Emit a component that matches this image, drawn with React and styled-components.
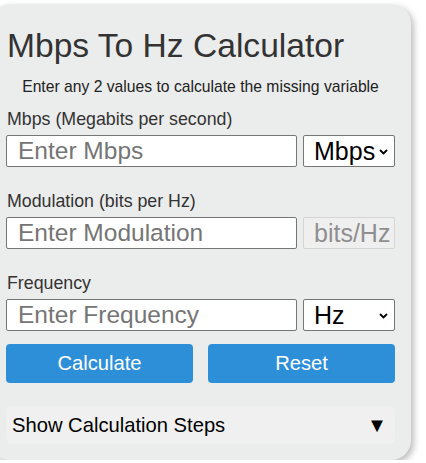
import React from "react";
import styled, { createGlobalStyle } from "styled-components";

const GlobalStyle = createGlobalStyle`
  html, body {
    margin: 0;
    padding: 0;
    background: #ffffff;
    font-family: "Liberation Sans", Arial, sans-serif;
  }
`;

// calculator card, slightly cut off on the left like the page it came from
const Card = styled.div`
  box-sizing: border-box;
  width: 421px;
  margin: 4px 0 0 -10px;
  padding: 23px 16px 16px 16px;
  background: #ebecec;
  border-radius: 20px;
  box-shadow: 3px 3px 6px rgba(0, 0, 0, 0.25);
`;

const Title = styled.h1`
  margin: 0 0 0 1px;
  font-size: 33.6px;
  font-weight: 400;
  line-height: 38px;
  color: #333333;
`;

const Subtitle = styled.p`
  margin: 13px 0 0 0;
  text-align: center;
  font-size: 15.7px;
  line-height: 18px;
  color: #222222;
`;

const Field = styled.div`
  margin-top: ${(p) => p.$top}px;
`;

const Label = styled.label`
  display: block;
  margin: 0 0 6px 1px;
  font-size: 17.8px;
  line-height: 20px;
  color: #333333;
`;

const Row = styled.div`
  display: flex;
  gap: 6px;
`;

const Input = styled.input`
  box-sizing: border-box;
  width: 291px;
  height: 32px;
  margin: 0;
  padding: 0 0 0 11px;
  border: 1px solid #767676;
  border-radius: 2px;
  background: #ffffff;
  font-family: "Liberation Sans", Arial, sans-serif;
  font-size: 24.5px;
  color: #000;
  outline: none;
  &::placeholder {
    color: #757575;
  }
`;

const UnitBox = styled.div`
  box-sizing: border-box;
  position: relative;
  width: 92px;
  height: 32px;
  display: flex;
  align-items: center;
  padding-left: 10px;
  border: 1px solid ${(p) => (p.$disabled ? "#d4d4d4" : "#767676")};
  border-radius: 2px;
  background: ${(p) => (p.$disabled ? "#efefef" : "#ffffff")};
  color: ${(p) => (p.$disabled ? "#8f8f8f" : "#000000")};
  font-size: 25px;
  white-space: nowrap;
  overflow: hidden;
`;

const Chevron = styled.svg`
  position: absolute;
  right: 6px;
  top: 13px;
`;

const Buttons = styled.div`
  display: flex;
  gap: 15px;
  margin-top: 13px;
`;

const Button = styled.button`
  flex: 1;
  height: 39px;
  border: none;
  border-radius: 4px;
  background: #2e8fd9;
  color: #ffffff;
  font-family: "Liberation Sans", Arial, sans-serif;
  font-size: 20.2px;
  cursor: pointer;
`;

const Steps = styled.div`
  display: flex;
  align-items: center;
  justify-content: space-between;
  height: 38px;
  margin-top: 23px;
  padding: 0 8px 0 6px;
  border-radius: 6px;
  background: #f0f0f0;
  color: #000000;
  font-size: 20.2px;
`;

const Unit = ({ value, disabled }) => (
  <UnitBox $disabled={disabled}>
    {value}
    {!disabled && (
      <Chevron width="9" height="6" viewBox="0 0 9 6">
        <path d="M1 1l3.5 3.5L8 1" fill="none" stroke="#000" strokeWidth="1.8" />
      </Chevron>
    )}
  </UnitBox>
);

const App = () => {
  return (
    <>
      <GlobalStyle />
      <Card>
        <Title>Mbps To Hz Calculator</Title>
        <Subtitle>Enter any 2 values to calculate the missing variable</Subtitle>

        <Field $top={13}>
          <Label>Mbps (Megabits per second)</Label>
          <Row>
            <Input placeholder="Enter Mbps" />
            <Unit value="Mbps" />
          </Row>
        </Field>

        <Field $top={24}>
          <Label>Modulation (bits per Hz)</Label>
          <Row>
            <Input placeholder="Enter Modulation" />
            <Unit value="bits/Hz" disabled />
          </Row>
        </Field>

        <Field $top={24}>
          <Label>Frequency</Label>
          <Row>
            <Input placeholder="Enter Frequency" />
            <Unit value="Hz" />
          </Row>
        </Field>

        <Buttons>
          <Button>Calculate</Button>
          <Button>Reset</Button>
        </Buttons>

        <Steps>
          <span>Show Calculation Steps</span>
          <span>▼</span>
        </Steps>
      </Card>
    </>
  );
};

export default App;
